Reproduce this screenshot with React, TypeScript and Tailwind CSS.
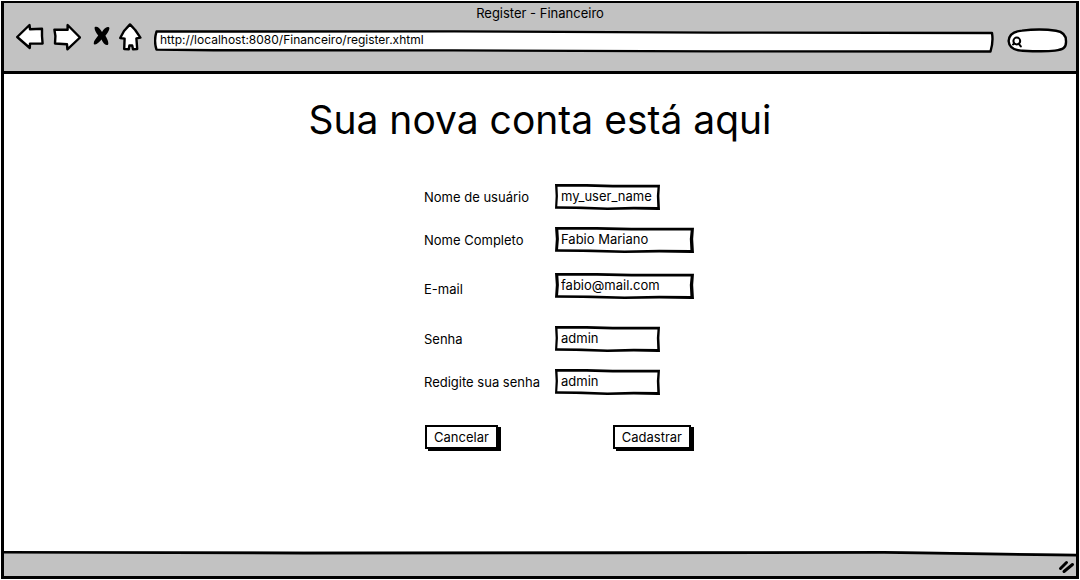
import React from "react";

type FieldProps = {
  id: string;
  label: string;
  value: string;
  wide?: boolean;
  low?: boolean;
  space?: string;
};

function SketchFrame() {
  return (
    <svg
      className="pointer-events-none absolute inset-0 h-full w-full"
      viewBox="0 0 100 26"
      preserveAspectRatio="none"
      fill="#000"
      aria-hidden="true"
    >
      <path
        fillRule="evenodd"
        d="M0 0 L30 0 L55 .8 L100 .8 L99.4 12 L100 26 L98 26 L75 25.6 L50 26 L20 25 L0 24.8 L.6 12 Z M2.4 2.8 L2.8 12 L2.2 22.3 L25 22.6 L50 23.6 L75 22.8 L97.4 23 L97 12 L97.6 3.6 L55 3.4 L30 2.8 Z"
      />
    </svg>
  );
}

function Field({ id, label, value, wide, low, space = "" }: FieldProps) {
  return (
    <div className={`grid grid-cols-[131px_1fr] items-center ${space}`}>
      <label htmlFor={id} className={low ? "self-end" : ""}>
        {label}
      </label>
      <div className={`relative h-[26px] ${wide ? "w-[139px]" : "w-[105px]"}`}>
        <SketchFrame />
        <input
          id={id}
          type="text"
          defaultValue={value}
          className="relative block h-6 w-full bg-transparent pl-1.5 outline-none"
        />
      </div>
    </div>
  );
}

function SketchButton({ children, type }: { children: React.ReactNode; type: "button" | "submit" }) {
  return (
    <button
      type={type}
      className="h-6 border-2 border-black bg-white px-[7px] leading-5 shadow-[3px_2px_0_#000]"
    >
      {children}
    </button>
  );
}

function NavButton({ label, className, children }: { label: string; className: string; children: React.ReactNode }) {
  return (
    <button type="button" aria-label={label} className={`h-[30px] shrink-0 ${className}`}>
      {children}
    </button>
  );
}

const stroke = {
  fill: "#fff",
  stroke: "#000",
  strokeWidth: 2.4,
  strokeLinejoin: "round" as const,
  strokeLinecap: "round" as const,
};

export default function App() {
  return (
    <div className="flex min-h-screen flex-col bg-white p-px font-['Inter',sans-serif] text-[13px] leading-5 text-black">
      <div className="flex grow flex-col border-[3px] border-t-2 border-black">
        <header className="border-b-[3px] border-black bg-[#c2c2c2] pb-[18px]">
          <p className="text-center">Register - Financeiro</p>
          <div className="flex items-end pr-2 pl-3">
            <NavButton label="Voltar" className="w-7">
              <svg width="28" height="30" viewBox="0 0 28 30" {...stroke} aria-hidden="true">
                <path d="M1.2 14 L13.5 2 L14 6.3 L26 5.7 L26 13 L26.6 20.5 L14 20.6 L13.8 25 Z" />
              </svg>
            </NavButton>
            <NavButton label="Avançar" className="ml-[9px] w-7">
              <svg width="28" height="30" viewBox="0 0 28 30" {...stroke} aria-hidden="true">
                <path d="M27 14.5 L14.6 2 L14.6 6.7 L1.4 6.6 L2.4 13 L2 20.5 L14 21.3 L14.4 26.4 Z" />
              </svg>
            </NavButton>
            <NavButton label="Parar" className="ml-3 w-[18px]">
              <svg width="18" height="30" viewBox="0 0 18 30" aria-hidden="true">
                <path
                  d="M1.8 4 C4 3 6.5 4.5 9 9 C11 5.5 13.5 3 16 4.2 C17.5 6 14.5 9.5 12.4 12.8 C14.5 16 16 20 15 21.8 C12 23 10 19.8 8.5 16.6 C6.2 19.6 3.3 22.2 1 21.2 C-.2 19 3 15.6 5.2 12.6 C2.6 9 1 6 1.8 4 Z"
                  fill="#000"
                />
              </svg>
            </NavButton>
            <NavButton label="Página inicial" className="ml-2 w-6">
              <svg width="24" height="30" viewBox="0 0 24 30" {...stroke} aria-hidden="true">
                <path d="M11 1.4 L16.2 7 L21.4 14.6 L17.4 15.4 L18.2 26 L14 26.2 L13.2 22.5 L10.4 22.4 L9.8 26.3 L5.2 26 L5.6 15.6 L1.2 15 L5 8 Z" />
              </svg>
            </NavButton>
            <div className="relative ml-[11px] h-[23px] min-w-0 grow">
              <svg
                className="absolute inset-0 h-full w-full"
                viewBox="0 0 840 23"
                preserveAspectRatio="none"
                {...stroke}
                aria-hidden="true"
              >
                <path d="M2.5 1.5 L300 1.4 L560 2.6 L838 3 Q839.5 12 836.5 21.5 L560 21.4 L300 20.4 L60 20.2 L2.5 19.6 Q-.4 11 2.5 1.5 Z" />
              </svg>
              <input
                type="text"
                aria-label="Endereço"
                defaultValue="http://localhost:8080/Financeiro/register.xhtml"
                className="relative block h-5 w-full bg-transparent pl-1.5 text-xs leading-5 outline-none"
              />
            </div>
            <div className="relative ml-[13px] h-[26px] w-[61px] shrink-0">
              <svg className="absolute inset-0" width="61" height="26" viewBox="0 0 61 26" {...stroke} aria-hidden="true">
                <path d="M15 3.6 C25 2.4 38 2 49 3.8 C57 5 59 9 59 14 C59.4 21 56 22.5 48 23.6 C37 25 28 24.4 14 23.6 C6 23 2 19 1.6 14 C2 7 8 4.2 15 3.6 Z" />
                <circle cx="9.8" cy="14" r="3.4" strokeWidth="2" />
                <path d="M6 17.5 L7.2 16.6 M11.8 16.8 L13.8 19.4" strokeWidth="2" />
              </svg>
              <input type="search" aria-label="Pesquisar" className="relative h-full w-full bg-transparent pr-2 pl-5 outline-none" />
            </div>
          </div>
        </header>

        <main className="grow">
          <h1 className="pt-[22px] text-center text-[39px] leading-[48px]">Sua nova conta está aqui</h1>
          <form className="mx-auto mt-10 w-[308px] pl-[38px]" onSubmit={(e) => e.preventDefault()}>
            <Field id="usuario" label="Nome de usuário" value="my_user_name" />
            <Field id="nome" label="Nome Completo" value="Fabio Mariano" wide space="mt-[17px]" />
            <Field id="email" label="E-mail" value="fabio@mail.com" wide low space="mt-5" />
            <Field id="senha" label="Senha" value="admin" space="mt-[27px]" />
            <Field id="senha2" label="Redigite sua senha" value="admin" space="mt-[17px]" />
            <div className="mt-[30px] flex justify-between pr-[3px] pl-px">
              <SketchButton type="button">Cancelar</SketchButton>
              <SketchButton type="submit">Cadastrar</SketchButton>
            </div>
          </form>
        </main>

        <footer className="relative flex h-[25px] items-end justify-end bg-[#c2c2c2]">
          <svg
            className="absolute inset-x-0 top-0 h-1.5 w-full"
            viewBox="0 0 1072 6"
            preserveAspectRatio="none"
            aria-hidden="true"
          >
            <path d="M0 0 L880 0 L1072 3 L1072 0 Z" fill="#fff" />
            <path d="M0 0 L300 .7 L700 .2 L880 0 L1072 2.8 L1072 5.6 L880 2.8 L600 3.2 L300 3.4 L0 2.6 Z" fill="#000" />
          </svg>
          <svg className="mb-0.5" width="18" height="14" viewBox="0 0 18 14" stroke="#000" strokeWidth="3" strokeLinecap="round" aria-hidden="true">
            <path d="M2.5 8.5 L8.5 2.5 M6 11.5 L14.5 4.5" />
          </svg>
        </footer>
      </div>
    </div>
  );
}
